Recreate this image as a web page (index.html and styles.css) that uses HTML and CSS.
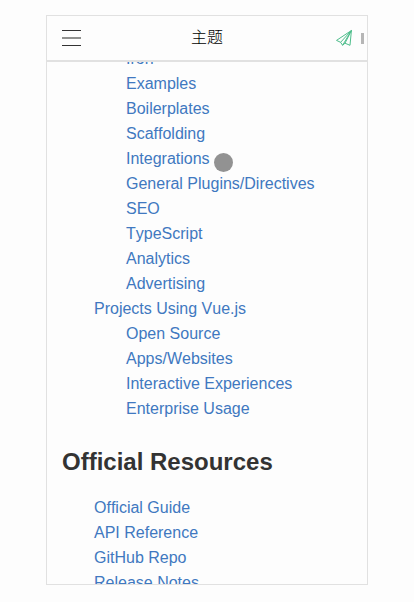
FILE: index.html
```html
<!DOCTYPE html>
<html lang="zh">
<head>
<meta charset="utf-8">
<title>主题</title>
<link rel="stylesheet" href="styles.css">
</head>
<body>
<main class="phone">
  <header class="bar">
    <div class="menu"><span></span><span class="mid"></span><span></span></div>
    <h1 class="title">主题</h1>
    <svg class="send" viewBox="0 0 18 18" width="18" height="18">
      <path d="M16.4 1.5 1.5 11.4 5.6 13.3 7.6 16.3 10 14.2 15 16.3ZM16.4 1.5 5.6 13.3M16.4 1.5 10 14.2M16.4 1.5 7.6 16.3"/>
    </svg>
    <i class="scroll-mark"></i>
  </header>
  <div class="content">
    <ul class="list">
      <li>
        <ul class="sub">
          <li><a>Iron</a></li>
          <li><a>Examples</a></li>
          <li><a>Boilerplates</a></li>
          <li><a>Scaffolding</a></li>
          <li class="touched"><a>Integrations</a><span class="touch"></span></li>
          <li><a>General Plugins/Directives</a></li>
          <li><a>SEO</a></li>
          <li><a>TypeScript</a></li>
          <li><a>Analytics</a></li>
          <li><a>Advertising</a></li>
        </ul>
      </li>
      <li><a>Projects Using Vue.js</a>
        <ul class="sub">
          <li><a>Open Source</a></li>
          <li><a>Apps/Websites</a></li>
          <li><a>Interactive Experiences</a></li>
          <li><a>Enterprise Usage</a></li>
        </ul>
      </li>
    </ul>
    <h2 class="heading">Official Resources</h2>
    <ul class="list">
      <li><a>Official Guide</a></li>
      <li><a>API Reference</a></li>
      <li><a>GitHub Repo</a></li>
      <li><a>Release Notes</a></li>
    </ul>
  </div>
</main>
</body>
</html>
```
FILE: styles.css
```css
* { box-sizing: border-box; }
body {
  margin: 0;
  padding: 15px 0 0 46px;
  height: 602px;
  overflow: hidden;
  background: #fdfdfd;
  font: 16px/25px "Liberation Sans", "Noto Sans CJK SC", sans-serif;
  font-kerning: none;
  color: #333;
}
.phone {
  width: 322px;
  height: 570px;
  border: 1px solid #e1e1e1;
  display: flex;
  flex-direction: column;
  overflow: hidden;
}
.bar {
  flex: none;
  height: 46px;
  border-bottom: 2px solid #e1e1e1;
  display: grid;
  grid-template-columns: 19px 1fr 18px 3px;
  align-items: center;
  padding: 0 3px 0 15px;
}
.menu {
  display: flex;
  flex-direction: column;
  justify-content: space-between;
  height: 16px;
}
.menu span { height: 1px; background: #333; }
.menu .mid { height: 2px; background: #90918f; }
.title {
  margin: 0;
  padding-left: 110px;
  font-size: 16px;
  line-height: 24px;
  font-weight: 300;
  color: #000;
}
.send {
  margin-left: -8px;
  fill: none;
  stroke: #4dbd8b;
  stroke-width: 1;
  stroke-linejoin: round;
}
.scroll-mark { height: 11px; background: #b6b6b6; }
.content {
  flex: 1;
  min-height: 0;
  overflow: hidden;
  padding: 0 15px;
}
.list, .sub { list-style: none; margin: 0; padding-left: 32px; }
.content > .list:first-child { margin-top: -16px; }
.list a { color: #4078c0; }
.touched { position: relative; }
.touch {
  position: absolute;
  left: 88px;
  top: 7px;
  width: 19px;
  height: 19px;
  border-radius: 50%;
  background: #929292;
}
.heading {
  margin: 26px 0 18px;
  font-size: 24px;
  line-height: 30px;
  font-weight: 700;
}
```
